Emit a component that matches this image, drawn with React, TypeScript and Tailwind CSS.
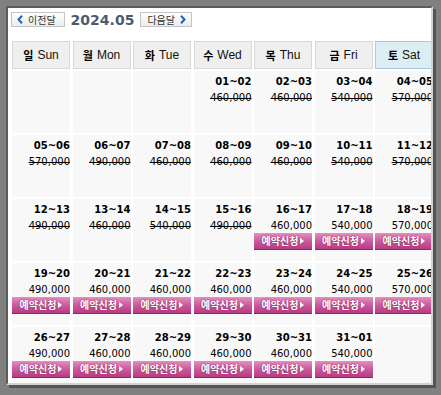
import React from 'react'

type Cell = { date: string; price: string; open: boolean } | null

const days: [string, string][] = [
  ['일', 'Sun'],
  ['월', 'Mon'],
  ['화', 'Tue'],
  ['수', 'Wed'],
  ['목', 'Thu'],
  ['금', 'Fri'],
  ['토', 'Sat'],
]

const c = (date: string, price: string, open = false): Cell => ({ date, price, open })

const weeks: Cell[][] = [
  [null, null, null, c('01~02', '460,000'), c('02~03', '460,000'), c('03~04', '540,000'), c('04~05', '570,000')],
  [c('05~06', '570,000'), c('06~07', '490,000'), c('07~08', '460,000'), c('08~09', '460,000'), c('09~10', '460,000'), c('10~11', '540,000'), c('11~12', '570,000')],
  [c('12~13', '490,000'), c('13~14', '460,000'), c('14~15', '540,000'), c('15~16', '490,000'), c('16~17', '460,000', true), c('17~18', '540,000', true), c('18~19', '570,000', true)],
  [c('19~20', '490,000', true), c('20~21', '460,000', true), c('21~22', '460,000', true), c('22~23', '460,000', true), c('23~24', '460,000', true), c('24~25', '540,000', true), c('25~26', '570,000', true)],
  [c('26~27', '490,000', true), c('27~28', '460,000', true), c('28~29', '460,000', true), c('29~30', '460,000', true), c('30~31', '460,000', true), c('31~01', '540,000', true), null],
]

const Chevron: React.FC<{ dir: 'prev' | 'next' }> = ({ dir }) => (
  <svg width="6" height="9" viewBox="0 0 6 9" className="shrink-0">
    <polyline
      points={dir === 'prev' ? '5,0.8 1.5,4.5 5,8.2' : '1,0.8 4.5,4.5 1,8.2'}
      fill="none"
      stroke="#2462b4"
      strokeWidth="2"
    />
  </svg>
)

const NavButton: React.FC<{ label: string; dir: 'prev' | 'next' }> = ({ label, dir }) => (
  <div className="h-[15px] flex items-center gap-[5px] px-[5px] border border-[#c4c4c4] bg-gradient-to-b from-[#ffffff] to-[#ececec] text-[10px] text-[#333] font-['Noto_Sans_CJK_KR',sans-serif] leading-none">
    {dir === 'prev' && <Chevron dir="prev" />}
    <span className={dir === 'prev' ? 'pr-[3px]' : 'pl-[1px]'}>{label}</span>
    {dir === 'next' && <Chevron dir="next" />}
  </div>
)

const App: React.FC = () => {
  return (
    <div className="w-[441px] h-[395px] bg-[#808080] pt-[6px] pl-[6px]">
      <div className="w-[427px] h-[379px] border-2 border-t-[#5c5c5c] border-l-[#5c5c5c] border-r-[#d2d2d2] border-b-[#d2d2d2] bg-white shadow-[3px_3px_0_#555] overflow-hidden">
        <div className="flex items-center mt-[3px] ml-[3px] h-[17px]">
          <NavButton label="이전달" dir="prev" />
          <div className="mx-[6px] text-[14px] font-bold text-[#4e5a70] font-['DejaVu_Sans',sans-serif] leading-none">2024.05</div>
          <NavButton label="다음달" dir="next" />
        </div>

        <div className="mt-[13px] ml-[4px] grid grid-cols-[repeat(7,58px)] gap-x-[2.5px] gap-y-[2px]">
          {days.map(([ko, en], i) => (
            <div
              key={en}
              className={
                'h-[28px] flex items-center justify-center gap-[4px] border ' +
                (i === 6 ? 'bg-[#dcedf4] border-[#a9c9dd]' : 'bg-[#efefef] border-[#d8d8d8]')
              }
            >
              <span className="text-[11px] font-bold text-black font-['Noto_Sans_CJK_KR',sans-serif]">{ko}</span>
              <span className="text-[12px] text-[#111] font-['Liberation_Sans',sans-serif]">{en}</span>
            </div>
          ))}

          {weeks.flat().map((cell, i) => (
            <div key={i} className="h-[62px] bg-[#f8f8f8] flex flex-col items-stretch pt-[4px]">
              {cell && (
                <>
                  <div className="text-right text-[10px] leading-[13px] font-bold text-black font-['DejaVu_Sans',sans-serif]">
                    {cell.date}
                  </div>
                  <div
                    className={
                      'mt-[2.5px] text-right text-[10px] leading-[13px] text-black font-["DejaVu_Sans",sans-serif] ' +
                      (cell.open ? '' : 'line-through')
                    }
                  >
                    {cell.price}
                  </div>
                  {cell.open && (
                    <div className="mt-[1.5px] h-[17px] flex items-center justify-center gap-[2px] bg-gradient-to-b from-[#e48fc0] via-[#cc5a9c] to-[#b63d82] border-b border-[#8e2460] text-white font-bold text-[10px] leading-none font-['Noto_Sans_CJK_KR',sans-serif] [text-shadow:0_0_2px_#7a1a50]">
                      <span>예약신청</span>
                      <span className="w-0 h-0 border-y-[3.5px] border-y-transparent border-l-[4px] border-l-white" />
                    </div>
                  )}
                </>
              )}
            </div>
          ))}
        </div>
      </div>
    </div>
  )
}

export default App
